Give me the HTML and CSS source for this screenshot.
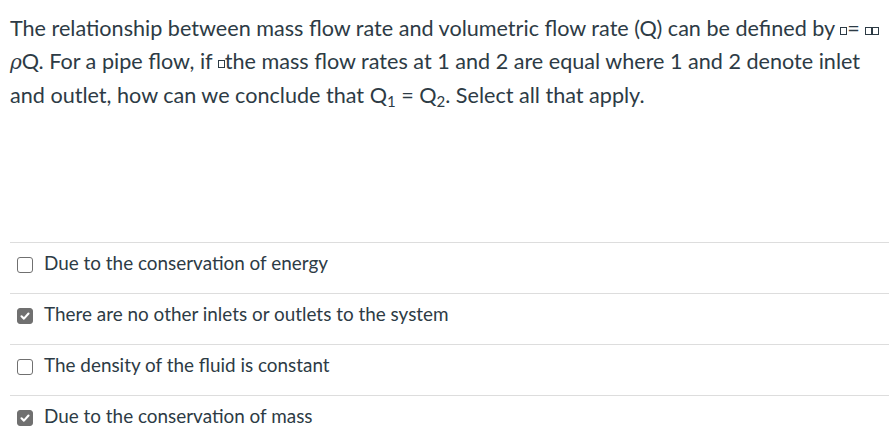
FILE: index.html
```html
<!DOCTYPE html>
<html>
<head>
<meta charset="utf-8">
<link rel="stylesheet" href="styles.css">
</head>
<body>
<div class="quiz">
  <div class="question">
    The relationship between mass flow rate and volumetric flow rate (Q) can be defined by <span class="tofu"></span>= <span class="tofu"></span><span class="tofu"></span><br>
    <i class="rho">ρ</i>Q. For a pipe flow, if <span class="tofu"></span>the mass flow rates at 1 and 2 are equal where 1 and 2 denote inlet and outlet, how can we conclude that Q<sub>1</sub> = Q<sub>2</sub>. Select all that apply.
  </div>
  <div class="answers">
    <label class="answer"><span class="box"></span><span class="text">Due to the conservation of energy</span></label>
    <label class="answer"><span class="box checked"><svg viewBox="0 0 16 16"><path d="M4 8.3 L6.8 11 L12 5.2" fill="none" stroke="#fff" stroke-width="2.4" stroke-linecap="round" stroke-linejoin="round"/></svg></span><span class="text">There are no other inlets or outlets to the system</span></label>
    <label class="answer"><span class="box"></span><span class="text">The density of the fluid is constant</span></label>
    <label class="answer"><span class="box checked"><svg viewBox="0 0 16 16"><path d="M4 8.3 L6.8 11 L12 5.2" fill="none" stroke="#fff" stroke-width="2.4" stroke-linecap="round" stroke-linejoin="round"/></svg></span><span class="text">Due to the conservation of mass</span></label>
  </div>
</div>
</body>
</html>
```
FILE: styles.css
```css
html, body {
  margin: 0;
  padding: 0;
  background: #fff;
}
.quiz {
  font-family: Lato, "Open Sans", sans-serif;
  color: #2d3b45;
  padding: 12px 5px 0 10px;
}
.question {
  font-size: 21.6px;
  line-height: 33px;
  height: 230px;
}
.question sub {
  font-size: 15px;
  vertical-align: -4px;
  line-height: 0;
}
.rho {
  font-family: "DejaVu Serif", serif;
  font-size: 20px;
}
.tofu {
  display: inline-block;
  width: 5px;
  height: 6px;
  border: 1px solid #2d3b45;
  margin: 0 0 1px 0;
  vertical-align: baseline;
}
.answers {
  display: flex;
  flex-direction: column;
}
.answer {
  display: flex;
  align-items: flex-start;
  gap: 11px;
  height: 50px;
  box-sizing: content-box;
  border-top: 1px solid #ddd;
  padding: 0 0 0 7px;
  font-size: 18.9px;
  line-height: 24px;
}
.text {
  padding-top: 8px;
}
.box {
  margin-top: 14px;
  width: 14px;
  height: 14px;
  border: 1px solid #707070;
  border-radius: 3px;
  display: flex;
  align-items: center;
  justify-content: center;
  flex: none;
}
.box.checked {
  background: #707070;
}
.box svg {
  width: 14px;
  height: 14px;
}
```
